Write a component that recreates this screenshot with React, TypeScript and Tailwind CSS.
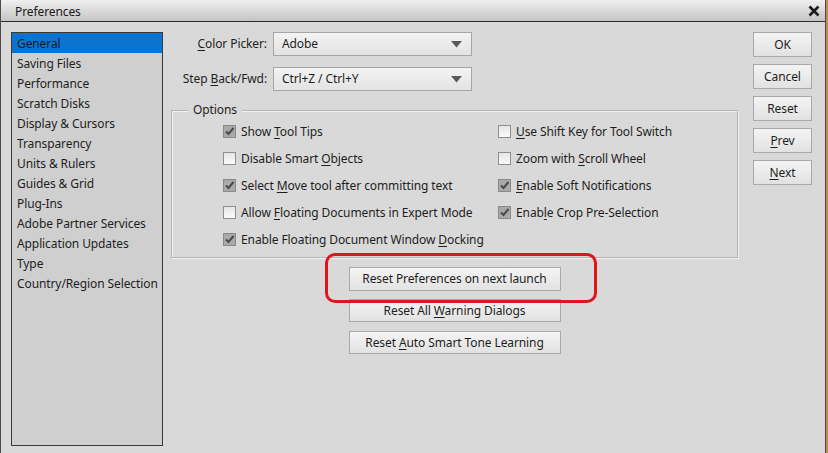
import React from "react";

const font = { fontFamily: '"Noto Sans", "Open Sans", sans-serif' };

function U({ children }: { children: React.ReactNode }) {
  return <span className="underline underline-offset-2 decoration-1">{children}</span>;
}

function Check({ checked }: { checked: boolean }) {
  return checked ? (
    <div className="w-[13px] h-[13px] border border-[#8a8a8a] bg-[#a9a9a9] flex items-center justify-center shrink-0">
      <svg width="11" height="11" viewBox="0 0 11 11">
        <path d="M2 5.5 L4.5 8 L9.5 2" stroke="#4a4a4a" strokeWidth="2" fill="none" />
      </svg>
    </div>
  ) : (
    <div className="w-[13px] h-[13px] border border-[#8f8f8f] bg-gradient-to-b from-[#e6e6e6] to-[#fafafa] shrink-0" />
  );
}

function Opt({ checked, children }: { checked: boolean; children: React.ReactNode }) {
  return (
    <div className="h-[27px] flex items-center gap-[4px] text-[12px] tracking-[-0.1px] text-[#1e1e1e] whitespace-nowrap">
      <Check checked={checked} />
      <span className="ml-[1px]">{children}</span>
    </div>
  );
}

function Btn({ children, className = "" }: { children: React.ReactNode; className?: string }) {
  return (
    <div
      className={
        "flex items-center justify-center border border-[#a9a9a9] bg-gradient-to-b from-[#f4f4f4] to-[#e2e2e2] text-[12px] tracking-[-0.1px] text-[#1e1e1e] whitespace-nowrap " +
        className
      }
    >
      <span>{children}</span>
    </div>
  );
}

function Drop({ value }: { value: string }) {
  return (
    <div className="w-[199px] h-[24px] border border-[#a6a6a6] bg-gradient-to-b from-[#f3f3f3] to-[#e3e3e3] flex items-center justify-between pl-[8px] pr-[9px] text-[12px] tracking-[-0.1px] text-[#1e1e1e]">
      <span>{value}</span>
      <svg width="11" height="7" viewBox="0 0 11 7">
        <path d="M0 0 H11 L5.5 6.5 Z" fill="#5a5a5a" />
      </svg>
    </div>
  );
}

const items = [
  "General",
  "Saving Files",
  "Performance",
  "Scratch Disks",
  "Display & Cursors",
  "Transparency",
  "Units & Rulers",
  "Guides & Grid",
  "Plug-Ins",
  "Adobe Partner Services",
  "Application Updates",
  "Type",
  "Country/Region Selection",
];

export default function App() {
  return (
    <div style={font} className="w-[828px] h-[453px] overflow-hidden flex bg-[#c48a4a]">
      <div className="w-[826px] h-[453px] bg-[#d9d9d9] border-l border-r border-[#4a4a4a] flex flex-col">
        {/* title bar */}
        <div className="h-[22px] shrink-0 bg-gradient-to-b from-[#f0f0f0] via-[#dadada] to-[#c4c4c4] border-b border-[#2e2e2e] flex items-center justify-between pl-[14px] pr-[5px] pt-[3px]">
          <span className="text-[12px] tracking-[-0.1px] text-[#1a1a1a]">Preferences</span>
          <svg width="12" height="12" viewBox="0 0 12 12" className="-mt-[2px]">
            <path d="M1.5 1.5 L10.5 10.5 M10.5 1.5 L1.5 10.5" stroke="#1a1a1a" strokeWidth="2.6" />
          </svg>
        </div>
        {/* body */}
        <div className="flex pl-[10px] pt-[10px]">
          {/* list */}
          <div className="w-[152px] h-[414px] border border-[#3a3a3a] bg-[#cfcfcf] shrink-0">
            {items.map((it, i) => (
              <div
                key={it}
                className={
                  "h-[20px] flex items-center pl-[5px] pt-[1px] text-[12px] tracking-[-0.1px] whitespace-nowrap " +
                  (i === 0 ? "bg-[#0b74d1] text-[#1a1a1a]" : "text-[#1e1e1e]")
                }
              >
                {it}
              </div>
            ))}
          </div>
          {/* main */}
          <div className="ml-[8px] w-[567px] flex flex-col">
            <div className="flex items-center h-[24px]">
              <div className="w-[96px] text-right text-[12px] tracking-[-0.1px] text-[#1e1e1e] whitespace-nowrap">
                <U>C</U>olor Picker:
              </div>
              <div className="ml-[6px]">
                <Drop value="Adobe" />
              </div>
            </div>
            <div className="flex items-center h-[24px] mt-[11px]">
              <div className="w-[96px] text-right text-[12px] tracking-[-0.1px] text-[#1e1e1e] whitespace-nowrap">
                Step <U>B</U>ack/Fwd:
              </div>
              <div className="ml-[6px]">
                <Drop value="Ctrl+Z / Ctrl+Y" />
              </div>
            </div>
            {/* group */}
            <div className="relative mt-[19px] h-[148px] border border-[#b4b4b4] shadow-[inset_1px_1px_0_#f2f2f2,1px_1px_0_#f2f2f2]">
              <div className="absolute -top-[9px] left-[16px] px-[5px] bg-[#d9d9d9] text-[12px] tracking-[-0.1px] text-[#1e1e1e] leading-[16px]">
                Options
              </div>
              <div className="flex pt-[7px] pl-[51px]">
                <div className="w-[275px] flex flex-col">
                  <Opt checked>Show <U>T</U>ool Tips</Opt>
                  <Opt checked={false}>Disable Smart <U>O</U>bjects</Opt>
                  <Opt checked>Select <U>M</U>ove tool after committing text</Opt>
                  <Opt checked={false}>Allow <U>F</U>loating Documents in Expert Mode</Opt>
                  <Opt checked>Enable Floating Document Window <U>D</U>ocking</Opt>
                </div>
                <div className="flex flex-col">
                  <Opt checked={false}><U>U</U>se Shift Key for Tool Switch</Opt>
                  <Opt checked={false}>Zoom with <U>S</U>croll Wheel</Opt>
                  <Opt checked><U>E</U>nable Soft Notifications</Opt>
                  <Opt checked>Enab<U>l</U>e Crop Pre-Selection</Opt>
                </div>
              </div>
            </div>
            {/* reset buttons */}
            <div className="flex flex-col items-center mt-[9px]">
              <div className="relative">
                <div className="absolute -left-[24px] -top-[14px] w-[272px] h-[50px] rounded-[10px] border-[3px] border-[#e0141b]" />
                <Btn className="w-[212px] h-[24px]">Reset Preferences on next launch</Btn>
              </div>
              <Btn className="w-[212px] h-[23px] mt-[8px]">Reset All <U>W</U>arning Dialogs</Btn>
              <Btn className="w-[212px] h-[23px] mt-[9px]">Reset <U>A</U>uto Smart Tone Learning</Btn>
            </div>
          </div>
          {/* right buttons */}
          <div className="ml-[15px] flex flex-col gap-[7px]">
            <Btn className="w-[59px] h-[25px]">OK</Btn>
            <Btn className="w-[59px] h-[25px]">Cancel</Btn>
            <Btn className="w-[59px] h-[25px]">Reset</Btn>
            <Btn className="w-[59px] h-[25px]"><U>P</U>rev</Btn>
            <Btn className="w-[59px] h-[25px]"><U>N</U>ext</Btn>
          </div>
        </div>
      </div>
    </div>
  );
}
